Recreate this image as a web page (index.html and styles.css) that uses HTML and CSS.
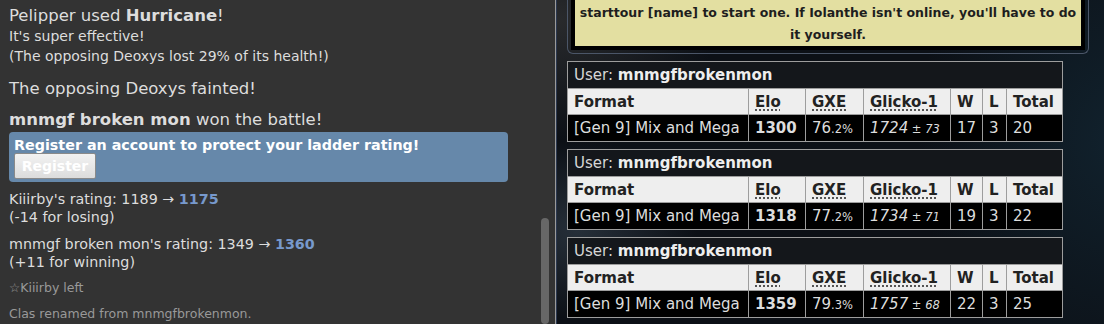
FILE: index.html
```html
<!DOCTYPE html>
<html lang="en">
<head>
    <meta charset="UTF-8">
    <meta name="viewport" content="width=device-width, initial-scale=1.0">
    <title>Battle</title>
    <link rel="stylesheet" href="styles.css">
</head>
<body>

    <div class="app">

        <!-- Battle log -->
        <div class="battle-log">
            <div class="log">
                <div class="msg">
                    <div class="big">Pelipper used <strong>Hurricane</strong>!</div>
                    <div class="small">It's super effective!</div>
                    <div class="small">(The opposing Deoxys lost 29% of its health!)</div>
                </div>
                <div class="msg big spaced first">The opposing Deoxys fainted!</div>
                <div class="msg big spaced"><strong>mnmgf broken mon</strong> won the battle!</div>

                <div class="register-box">
                    <strong>Register an account to protect your ladder rating!</strong>
                    <button class="register-btn">Register</button>
                </div>

                <div class="rating">
                    Kiiirby's rating: 1189 &rarr; <strong class="new-rating">1175</strong><br>
                    (-14 for losing)
                </div>
                <div class="rating second">
                    mnmgf broken mon's rating: 1349 &rarr; <strong class="new-rating">1360</strong><br>
                    (+11 for winning)
                </div>

                <div class="chat-note">&#9734;Kiiirby left</div>
                <div class="chat-note renamed">Clas renamed from mnmgfbrokenmon.</div>
            </div>
            <div class="scrollbar"><div class="thumb"></div></div>
        </div>

        <!-- Room -->
        <div class="room">
            <div class="notice-wrap">
                <div class="notice">
                    starttour [name] to start one. If Iolanthe isn't online, you'll have to do it yourself.
                </div>
            </div>

            <table class="ladder">
                <colgroup>
                    <col class="c-format"><col class="c-elo"><col class="c-gxe"><col class="c-glicko">
                    <col class="c-w"><col class="c-l"><col class="c-total">
                </colgroup>
                <tr><th colspan="7" class="user-row">User: <strong>mnmgfbrokenmon</strong></th></tr>
                <tr class="head-row">
                    <th>Format</th>
                    <th><abbr>Elo</abbr></th>
                    <th><abbr>GXE</abbr></th>
                    <th><abbr>Glicko-1</abbr></th>
                    <th>W</th>
                    <th>L</th>
                    <th>Total</th>
                </tr>
                <tr class="data-row">
                    <td>[Gen 9] Mix and Mega</td>
                    <td><strong>1300</strong></td>
                    <td>76<small>.2%</small></td>
                    <td><em>1724<small> &plusmn; 73</small></em></td>
                    <td>17</td>
                    <td>3</td>
                    <td>20</td>
                </tr>
            </table>

            <table class="ladder">
                <colgroup>
                    <col class="c-format"><col class="c-elo"><col class="c-gxe"><col class="c-glicko">
                    <col class="c-w"><col class="c-l"><col class="c-total">
                </colgroup>
                <tr><th colspan="7" class="user-row">User: <strong>mnmgfbrokenmon</strong></th></tr>
                <tr class="head-row">
                    <th>Format</th>
                    <th><abbr>Elo</abbr></th>
                    <th><abbr>GXE</abbr></th>
                    <th><abbr>Glicko-1</abbr></th>
                    <th>W</th>
                    <th>L</th>
                    <th>Total</th>
                </tr>
                <tr class="data-row">
                    <td>[Gen 9] Mix and Mega</td>
                    <td><strong>1318</strong></td>
                    <td>77<small>.2%</small></td>
                    <td><em>1734<small> &plusmn; 71</small></em></td>
                    <td>19</td>
                    <td>3</td>
                    <td>22</td>
                </tr>
            </table>

            <table class="ladder">
                <colgroup>
                    <col class="c-format"><col class="c-elo"><col class="c-gxe"><col class="c-glicko">
                    <col class="c-w"><col class="c-l"><col class="c-total">
                </colgroup>
                <tr><th colspan="7" class="user-row">User: <strong>mnmgfbrokenmon</strong></th></tr>
                <tr class="head-row">
                    <th>Format</th>
                    <th><abbr>Elo</abbr></th>
                    <th><abbr>GXE</abbr></th>
                    <th><abbr>Glicko-1</abbr></th>
                    <th>W</th>
                    <th>L</th>
                    <th>Total</th>
                </tr>
                <tr class="data-row">
                    <td>[Gen 9] Mix and Mega</td>
                    <td><strong>1359</strong></td>
                    <td>79<small>.3%</small></td>
                    <td><em>1757<small> &plusmn; 68</small></em></td>
                    <td>22</td>
                    <td>3</td>
                    <td>25</td>
                </tr>
            </table>
        </div>

    </div>

</body>
</html>
```

FILE: styles.css
```css
body {
    margin: 0;
    background-color: #333333;
    font-family: "DejaVu Sans", Verdana, sans-serif;
}

.app {
    display: flex;
    height: 324px;
    overflow: hidden;
}

/* Battle log */
.battle-log {
    display: flex;
    flex-shrink: 0;
    width: 555px;
    background-color: #333333;
    border-right: 1px solid #9a9a9a;
}

.log {
    width: 499px;
    padding: 6px 0 0 9px;
    color: #dddddd;
}

.big {
    font-size: 16.5px;
    line-height: 20px;
}

.small {
    font-size: 14px;
    line-height: 20px;
}

.spaced {
    margin-top: 11px;
}

.spaced.first {
    margin-top: 13px;
}

.register-box {
    margin-top: 2px;
    padding: 4px 5px 3px;
    background-color: #6688aa;
    border-radius: 4px;
    color: #ffffff;
    font-size: 14.3px;
    line-height: 18px;
}

.register-box strong {
    display: block;
}

.register-btn {
    display: block;
    width: 82px;
    height: 26px;
    margin-top: -1px;
    padding: 0;
    background: linear-gradient(#f2f2f2, #dcdcdc);
    border: 1px solid #8a8a8a;
    border-radius: 2px;
    color: #ffffff;
    font-family: "DejaVu Sans", Verdana, sans-serif;
    font-size: 14px;
    font-weight: bold;
}

.rating {
    margin-top: 8px;
    font-size: 14.3px;
    line-height: 18px;
}

.rating.second {
    margin-top: 9px;
}

.new-rating {
    color: #7799cc;
}

.chat-note {
    margin-top: 9px;
    color: #999999;
    font-size: 12.5px;
    line-height: 16px;
}

.chat-note.renamed {
    margin-top: 10px;
}

.scrollbar {
    width: 8px;
    margin-left: 33px;
}

.thumb {
    height: 106px;
    margin-top: 218px;
    background-color: #676767;
    border-radius: 4px;
}

/* Room */
.room {
    flex: 1;
    padding-left: 10px;
    border-left: 1px solid #2b3850;
    background:
        radial-gradient(ellipse 120px 90px at 20px 230px, rgba(70, 85, 100, 0.45), transparent),
        radial-gradient(ellipse 160px 120px at 0px 20px, rgba(60, 60, 60, 0.6), transparent),
        radial-gradient(ellipse 200px 260px at 560px 140px, rgba(20, 45, 60, 0.6), transparent),
        #0c1016;
}

.notice-wrap {
    margin: -22px 15px 0 0;
    padding: 3px;
    border: 1px solid #4b5668;
    border-top: none;
    border-radius: 0 0 6px 6px;
}

.notice {
    padding: 17px 2px 0;
    background-color: #e3dfa1;
    border: 4px solid #000000;
    color: #1e1e1e;
    font-size: 12.5px;
    font-weight: bold;
    line-height: 22px;
    text-align: center;
}

.ladder {
    width: 495px;
    margin-top: 7px;
    border-collapse: collapse;
    table-layout: fixed;
    font-size: 15px;
}

.ladder th, .ladder td {
    height: 26px;
    padding: 0 6px;
    border: 1px solid #9d9d9d;
    text-align: left;
    white-space: nowrap;
}

.user-row {
    background-color: #14171b;
    color: #d6d6d6;
    font-weight: normal;
}

.user-row strong {
    color: #eeeeee;
}

.ladder .head-row th {
    height: 25px;
    background-color: #eeeeee;
    color: #222222;
}

.head-row abbr {
    text-decoration: underline dotted;
    text-underline-offset: 3px;
}

.data-row td {
    background-color: #000000;
    color: #dddddd;
}

.data-row small {
    font-size: 11.5px;
}

.c-format { width: 181px; }
.c-elo { width: 57px; }
.c-gxe { width: 58px; }
.c-glicko { width: 87px; }
.c-w { width: 32px; }
.c-l { width: 24px; }
.c-total { width: 56px; }
```
